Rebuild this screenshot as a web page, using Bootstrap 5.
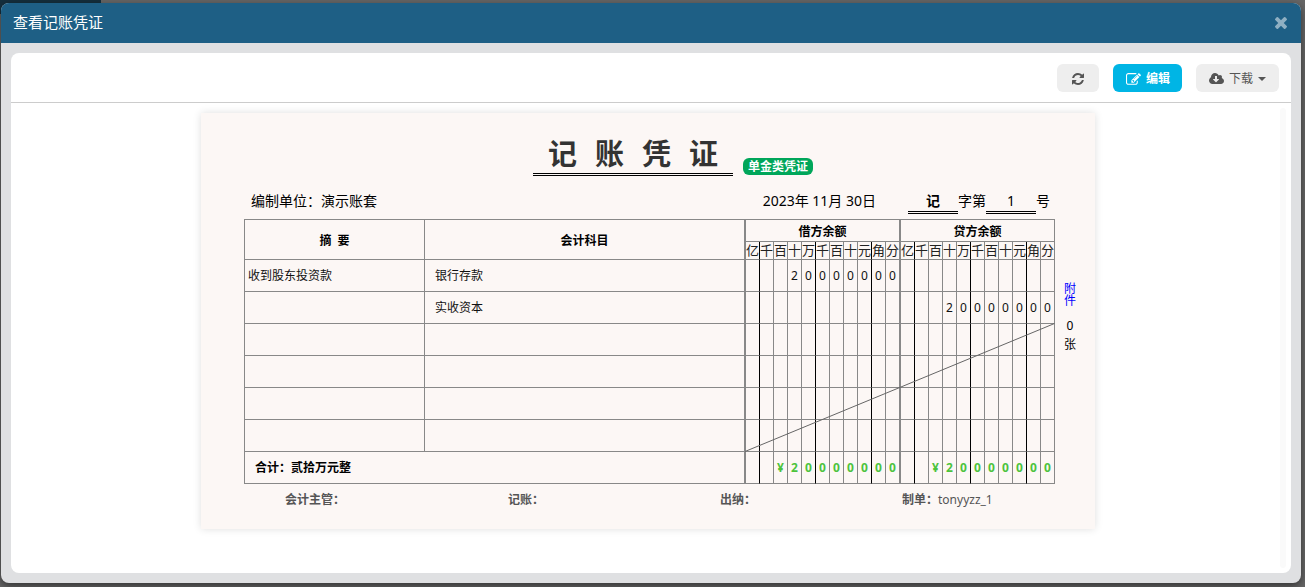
<!DOCTYPE html>
<html lang="zh-CN">
<head>
<meta charset="utf-8">
<meta name="viewport" content="width=device-width, initial-scale=1">
<title>查看记账凭证</title>
<link href="https://cdn.jsdelivr.net/npm/bootstrap@5.3.0/dist/css/bootstrap.min.css" rel="stylesheet">
<style>
  body { background: #666; font: 12px/20px "Noto Sans", "Noto Sans CJK SC", sans-serif; color: #000; }
  .backdrop-nav { position: absolute; left: 0; top: 0; width: 101px; height: 14px; background: #152f3d; }
  .dialog { position: relative; margin: 3px 4px 4px 1px; min-height: calc(100vh - 7px); border-radius: 8px; background: #dfe0e2; box-shadow: 0 3px 9px rgba(0,0,0,.5); overflow: hidden; }
  .dialog-head { height: 40px; background: #1e5f85; color: #fff; padding: 0 14px 0 12px; }
  .dialog-head h1 { font-size: 15px; font-weight: 400; line-height: 38px; margin: 0; height: 40px; }
  .close-btn { border: 0; padding: 0; background: none; color: #fff; opacity: .5; line-height: 1; }
  .panel { margin: 10px; border-radius: 8px; background: #fff; }
  .toolbar { height: 50px; padding: 0 12px; gap: 14px; border-bottom: 1px solid #ccc; }
  .tool { height: 28px; border: 0; border-radius: 6px; background: #eee; color: #555; font-size: 12px; line-height: 20px; padding: 2px 12px 0 13px; display: inline-flex; align-items: center; gap: 5px; }
  .tool.refresh { padding: 2px 15px 0; }
  .tool:hover { background: #e4e4e4; color: #555; }
  .tool.primary { background: #00b5e5; color: #fff; font-weight: 700; }
  .tool.dropdown-toggle::after { margin: 0; border-top: 4px solid; border-right: 4px solid transparent; border-left: 4px solid transparent; }
  .tool.dropdown-toggle { padding-right: 13px; }
  .tool svg, .close-btn svg { fill: currentColor; display: block; }
  .scroll-body { padding-left: 5px; }
  .scroll-track { width: 6px; margin: 5px 5px 5px 0; border-radius: 3px; background: #fafafa; }
  .voucher { width: 894px; margin: 10px auto 44px; padding: 23px 0 19px 43px; background: #fcf7f5; box-shadow: 0 0 8px rgba(0,0,0,.13); }
  .sheet { width: 811px; }
  .title-row { padding-left: 289px; gap: 10px; }
  .title-row h2 { width: 200px; margin: 0; padding-bottom: 1px; font-size: 29px; line-height: 36px; font-weight: 700; color: #333; gap: 18px; border-bottom: 3px double #000; }
  .kind { background: #00a65a; color: #fff; border-radius: 6px; padding: 0 5px; font-weight: 700; line-height: 17px; margin-bottom: 1px; }
  .info { margin: 15px 0 5px; padding: 0 5px 0 7px; font-size: 14px; }
  .info .date { margin-right: 32px; }
  .info .slot { width: 50px; text-align: center; border-bottom: 3px double #000; }
  .ledger { width: 811px; table-layout: fixed; border-collapse: separate; border-spacing: 0; border: solid #888; border-width: 1px 0 0 1px; }
  .ledger th, .ledger td { box-sizing: border-box; padding: 0; border: solid #888; border-width: 0 1px 1px 0; height: 32px; }
  .ledger thead th { text-align: center; font-weight: 700; line-height: 18px; padding-top: 3px; }
  .ledger thead tr:first-child th { height: 22px; }
  .ledger thead tr + tr th { height: 18px; line-height: 17px; font-size: 13px; font-weight: 400; white-space: nowrap; padding: 0; color: #222; }
  .ledger .digit { text-align: center; }
  .ledger tbody td { color: #111; }
  .ledger .mark-line { border-right-color: #000; }
  .ledger .wide-line { border-right-width: 2px; }
  .ledger .note { padding-left: 3px; }
  .ledger .subject { padding-left: 10px; }
  .ledger tfoot td { font-weight: 700; }
  .ledger tfoot .digit { color: #4cc33c; }
  .void-line { position: absolute; right: 0; bottom: 32px; width: 310px; height: 129px; }
  .side { width: 30px; padding-top: 64px; line-height: 12px; }
  .side a { width: 12px; color: #00f; text-decoration: none; margin-bottom: 13px; }
  .side span + span { margin-top: 7px; }
  .signs { display: grid; grid-template-columns: 223px 212px 182px 1fr; padding: 6px 0 0 41px; color: #555; }
  .signs b { font-weight: 700; }
</style>
</head>
<body>
<div class="backdrop-nav"></div>
<div class="dialog" role="dialog" aria-labelledby="dlgTitle">
  <header class="dialog-head d-flex align-items-center justify-content-between">
    <h1 id="dlgTitle">查看记账凭证</h1>
    <button type="button" class="close-btn" aria-label="关闭">
      <svg width="12" height="12" viewBox="302 366 1188 1188"><path d="M1490 1322q0 40-28 68l-136 136q-28 28-68 28t-68-28l-294-294-294 294q-28 28-68 28t-68-28l-136-136q-28-28-28-68t28-68l294-294-294-294q-28-28-28-68t28-68l136-136q28-28 68-28t68 28l294 294 294-294q28-28 68-28t68 28l136 136q28 28 28 68t-28 68l-294 294 294 294q28 28 28 68z"/></svg>
    </button>
  </header>
  <main class="panel">
    <div class="toolbar d-flex align-items-center justify-content-end">
      <button type="button" class="btn tool refresh" aria-label="刷新">
        <svg width="12" height="12" viewBox="0 0 1536 1536"><path d="M1511 928q0 5-1 7-64 268-268 434.500T764 1536q-146 0-282.500-55T238 1324l-129 129q-19 19-45 19t-45-19-19-45V960q0-26 19-45t45-19h448q26 0 45 19t19 45-19 45l-137 137q71 66 161 102t187 36q134 0 250-65t186-179q11-17 53-117 8-23 30-23h192q13 0 22.500 9.500t9.500 22.500zm25-800v448q0 26-19 45t-45 19h-448q-26 0-45-19t-19-45 19-45l138-138Q969 256 768 256q-134 0-250 65T332 500q-11 17-53 117-8 23-30 23H50q-13 0-22.500-9.500T18 608v-7q65-268 270-434.500T768 0q146 0 284 55.500T1297 212l130-129q19-19 45-19t45 19 19 45z"/></svg>
      </button>
      <button type="button" class="btn tool primary">
        <svg width="15" height="14" viewBox="0 0 1792 1672"><path d="M888 1184l116-116-152-152-116 116v56h96v96h56zm440-720q-16-16-33 1l-350 350q-17 17-1 33t33-1l350-350q17-17 1-33zm80 594v190q0 119-84.500 203.500t-203.500 84.500h-832q-119 0-203.500-84.500t-84.500-203.500v-832q0-119 84.500-203.500t203.500-84.500h832q63 0 117 25 15 7 18 23 3 17-9 29l-49 49q-14 14-32 8-23-6-45-6h-832q-66 0-113 47t-47 113v832q0 66 47 113t113 47h832q66 0 113-47t47-113v-126q0-13 9-22l64-64q15-15 35-7t20 29zm-96-738l288 288-672 672h-288v-288zm444 132l-92 92-288-288 92-92q28-28 68-28t68 28l152 152q28 28 28 68t-28 68z"/></svg>
        编辑
      </button>
      <button type="button" class="btn tool dropdown-toggle" data-bs-toggle="dropdown">
        <svg width="15" height="14" viewBox="0 0 1920 1792"><path d="M1280 928q0-14-9-23t-23-9h-224v-352q0-13-9.500-22.500t-22.500-9.500h-192q-13 0-22.500 9.500t-9.500 22.500v352h-224q-13 0-22.500 9.500t-9.500 22.500q0 14 9 23l352 352q9 9 23 9t23-9l351-351q10-12 10-24zm640 224q0 159-112.500 271.500t-271.500 112.500h-1088q-185 0-316.500-131.500t-131.500-316.500q0-130 70-240t188-165q-2-30-2-43 0-212 150-362t362-150q156 0 285.500 87t188.500 231q71-62 166-62 106 0 181 75t75 181q0 76-41 138 130 31 213.500 135.500t83.500 238.500z"/></svg>
        下载
      </button>
    </div>
    <div class="d-flex">
      <div class="scroll-body flex-grow-1">
        <article class="voucher">
          <div class="sheet title-row d-flex align-items-end">
            <h2 class="d-flex justify-content-center"><span>记</span> <span>账</span> <span>凭</span> <span>证</span></h2>
            <span class="kind">单金类凭证</span>
          </div>
          <div class="sheet info d-flex align-items-start">
            <span class="me-auto">编制单位：演示账套</span>
            <span class="date">2023年 11月 30日</span>
            <b class="slot">记</b><span>字第</span><span class="slot">1</span><span>号</span>
          </div>
          <div class="d-flex">
            <div class="sheet position-relative">
              <table class="ledger" id="ledger">
                <thead></thead><tbody></tbody><tfoot></tfoot>
              </table>
              <svg class="void-line" viewBox="0 0 310 129"><path d="M0 128.500L309.500 .5" stroke="#666" fill="none"/></svg>
            </div>
            <div class="side d-flex flex-column align-items-center">
              <a href="#">附件</a><span>0</span><span>张</span>
            </div>
          </div>
          <div class="sheet signs">
            <span><b>会计主管：</b></span><span><b>记账：</b></span><span><b>出纳：</b></span><span><b>制单：</b>tonyyzz_1</span>
          </div>
        </article>
      </div>
      <div class="scroll-track"></div>
    </div>
  </main>
</div>
<script src="https://cdn.jsdelivr.net/npm/bootstrap@5.3.0/dist/js/bootstrap.bundle.min.js"></script>
<script>
  const units = [...'亿千百十万千百十元角分'];
  const entries = [
    { note: '收到股东投资款', subject: '银行存款', debit: '20000000', credit: '' },
    { note: '', subject: '实收资本', debit: '', credit: '20000000' },
    {}, {}, {}, {}
  ];

  // One amount takes eleven cells; groups of digits end in a black rule.
  function cells(text, side, tag = 'td') {
    return [...(text || '').padStart(11)].map((ch, i) => {
      const rule = [0, 4, 8].includes(i) ? ' mark-line' : (i === 10 && side === 'debit') ? ' wide-line' : '';
      return `<${tag} class="digit${rule}">${ch.trim()}</${tag}>`;
    }).join('');
  }

  const table = document.getElementById('ledger');
  const widths = [180, 321, ...Array(10).fill(14), 15, ...Array(11).fill(14)];
  table.insertAdjacentHTML('afterbegin',
    '<colgroup>' + widths.map(w => `<col style="width:${w}px">`).join('') + '</colgroup>');
  table.tHead.innerHTML =
    `<tr><th rowspan="2">摘&nbsp; 要</th><th rowspan="2" class="wide-line">会计科目</th>
     <th colspan="11" class="wide-line">借方余额</th><th colspan="11">贷方余额</th></tr>
     <tr>${cells(units.join(''), 'debit', 'th')}${cells(units.join(''), 'credit', 'th')}</tr>`;
  table.tBodies[0].innerHTML = entries.map(e =>
    `<tr><td class="note">${e.note || ''}</td><td class="subject wide-line">${e.subject || ''}</td>
     ${cells(e.debit, 'debit')}${cells(e.credit, 'credit')}</tr>`).join('');
  table.tFoot.innerHTML =
    `<tr><td colspan="2" class="subject wide-line">合计：贰拾万元整</td>
     ${cells('¥20000000', 'debit')}${cells('¥20000000', 'credit')}</tr>`;
</script>
</body>
</html>
